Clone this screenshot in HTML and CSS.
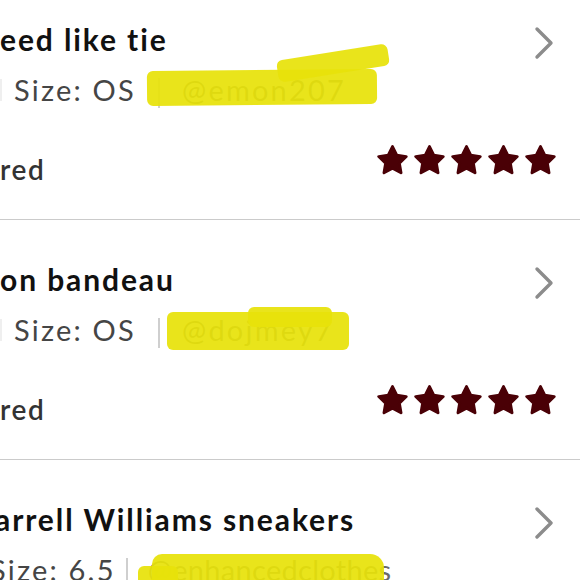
FILE: index.html
```html
<!DOCTYPE html>
<html>
<head>
<meta charset="utf-8">
<link rel="stylesheet" href="styles.css">
</head>
<body>
<svg width="0" height="0" class="defs">
  <defs>
    <symbol id="star" viewBox="0 0 30 30">
      <polygon points="15,2 19.11,10.34 28.31,11.67 21.66,18.16 23.23,27.33 15,23 6.77,27.33 8.34,18.16 1.69,11.67 10.89,10.34" fill="#4a0006" stroke="#4a0006" stroke-width="2.8" stroke-linejoin="round"/>
    </symbol>
    <symbol id="chev" viewBox="0 0 20 34">
      <polyline points="3,3 17,17 3,31" fill="none" stroke="#8c8c8c" stroke-width="3.4" stroke-linecap="round" stroke-linejoin="round"/>
    </symbol>
  </defs>
</svg>
<div class="list">
  <div class="item">
    <div class="top">
      <div class="title">eed like tie</div>
      <svg class="chev"><use href="#chev"/></svg>
    </div>
    <div class="meta">
      <span class="sep sep-lead"></span>
      <span class="size">Size: OS</span>
      <span class="sep"></span>
      <span class="user u1">@emon207</span>
    </div>
    <div class="bottom">
      <div class="label">red</div>
      <div class="stars">
        <svg class="star"><use href="#star"/></svg>
        <svg class="star"><use href="#star"/></svg>
        <svg class="star"><use href="#star"/></svg>
        <svg class="star"><use href="#star"/></svg>
        <svg class="star"><use href="#star"/></svg>
      </div>
    </div>
  </div>
  <div class="item">
    <div class="top">
      <div class="title">on bandeau</div>
      <svg class="chev"><use href="#chev"/></svg>
    </div>
    <div class="meta">
      <span class="sep sep-lead"></span>
      <span class="size">Size: OS</span>
      <span class="sep"></span>
      <span class="user u2">@dojmey7</span>
    </div>
    <div class="bottom">
      <div class="label">red</div>
      <div class="stars">
        <svg class="star"><use href="#star"/></svg>
        <svg class="star"><use href="#star"/></svg>
        <svg class="star"><use href="#star"/></svg>
        <svg class="star"><use href="#star"/></svg>
        <svg class="star"><use href="#star"/></svg>
      </div>
    </div>
  </div>
  <div class="item item-last">
    <div class="top">
      <div class="title title-cut">arrell Williams sneakers</div>
      <svg class="chev"><use href="#chev"/></svg>
    </div>
    <div class="meta meta-cut">
      <span class="size">Size: 6.5</span>
      <span class="sep sep-tight"></span>
      <span class="user u3">@enhancedclothes</span>
    </div>
  </div>
</div>
</body>
</html>
```

FILE: styles.css
```css
html, body {
  margin: 0;
  padding: 0;
  background: #ffffff;
  overflow: hidden;
}
body {
  width: 580px;
  height: 580px;
  font-family: "Lato", "Noto Sans", sans-serif;
}
.defs {
  position: absolute;
  width: 0;
  height: 0;
}
.list {
  margin-top: -20px;
}
.item {
  box-sizing: border-box;
  height: 240px;
  padding: 41px 24px 0 0;
  border-bottom: 1.5px solid #cbcbcb;
}
.item-last {
  height: 140px;
  border-bottom: none;
}
.top {
  display: flex;
  justify-content: space-between;
  align-items: center;
  height: 36px;
}
.title {
  font-size: 30px;
  font-weight: 700;
  letter-spacing: 1.9px;
  line-height: 36px;
  color: #111111;
  white-space: nowrap;
}
.title-cut {
  margin-left: -5px;
}
.chev {
  width: 20px;
  height: 34px;
  margin-right: 2px;
  margin-top: 7px;
}
.meta {
  display: flex;
  align-items: center;
  margin-top: 15px;
  height: 36px;
  font-size: 29px;
  line-height: 36px;
  letter-spacing: 2.2px;
  color: #454545;
  white-space: nowrap;
}
.meta-cut {
  margin-left: -10px;
}
.sep {
  display: inline-block;
  width: 2px;
  height: 30px;
  background: #cfcfcf;
  margin: 6px 22px 0 22px;
}
.sep-tight {
  margin: 6px 20px 0 10px;
}
.sep-lead {
  height: 22px;
  margin: 0 12px 0 0;
  background: #efefef;
}
.user {
  position: relative;
  color: #6a6a6a;
}
.user::before,
.user::after {
  content: "";
  position: absolute;
  background: #e7e20a;
  opacity: 0.93;
  border-radius: 6px;
}
.u1::before {
  left: -35px;
  top: -2px;
  width: 230px;
  height: 35px;
  transform: rotate(-0.5deg);
}
.u1::after {
  left: 95px;
  top: -20px;
  width: 112px;
  height: 22px;
  transform: rotate(-9deg);
}
.u2::before {
  left: -15px;
  top: 0px;
  width: 182px;
  height: 38px;
}
.u2::after {
  left: 66px;
  top: -5px;
  width: 84px;
  height: 20px;
}
.u3 {
  letter-spacing: 0.3px;
}
.u3::before {
  left: 4px;
  top: 2px;
  width: 232px;
  height: 40px;
  border-radius: 10px 14px 0 0;
}
.u3::after {
  left: -10px;
  top: 14px;
  width: 40px;
  height: 30px;
}
.bottom {
  display: flex;
  justify-content: space-between;
  align-items: center;
  margin-top: 43px;
  height: 36px;
}
.label {
  font-size: 28px;
  font-weight: 600;
  line-height: 36px;
  letter-spacing: 1.6px;
  color: #333333;
}
.stars {
  display: flex;
  gap: 6px;
  margin-bottom: 18px;
}
.star {
  width: 31px;
  height: 32px;
}
```
